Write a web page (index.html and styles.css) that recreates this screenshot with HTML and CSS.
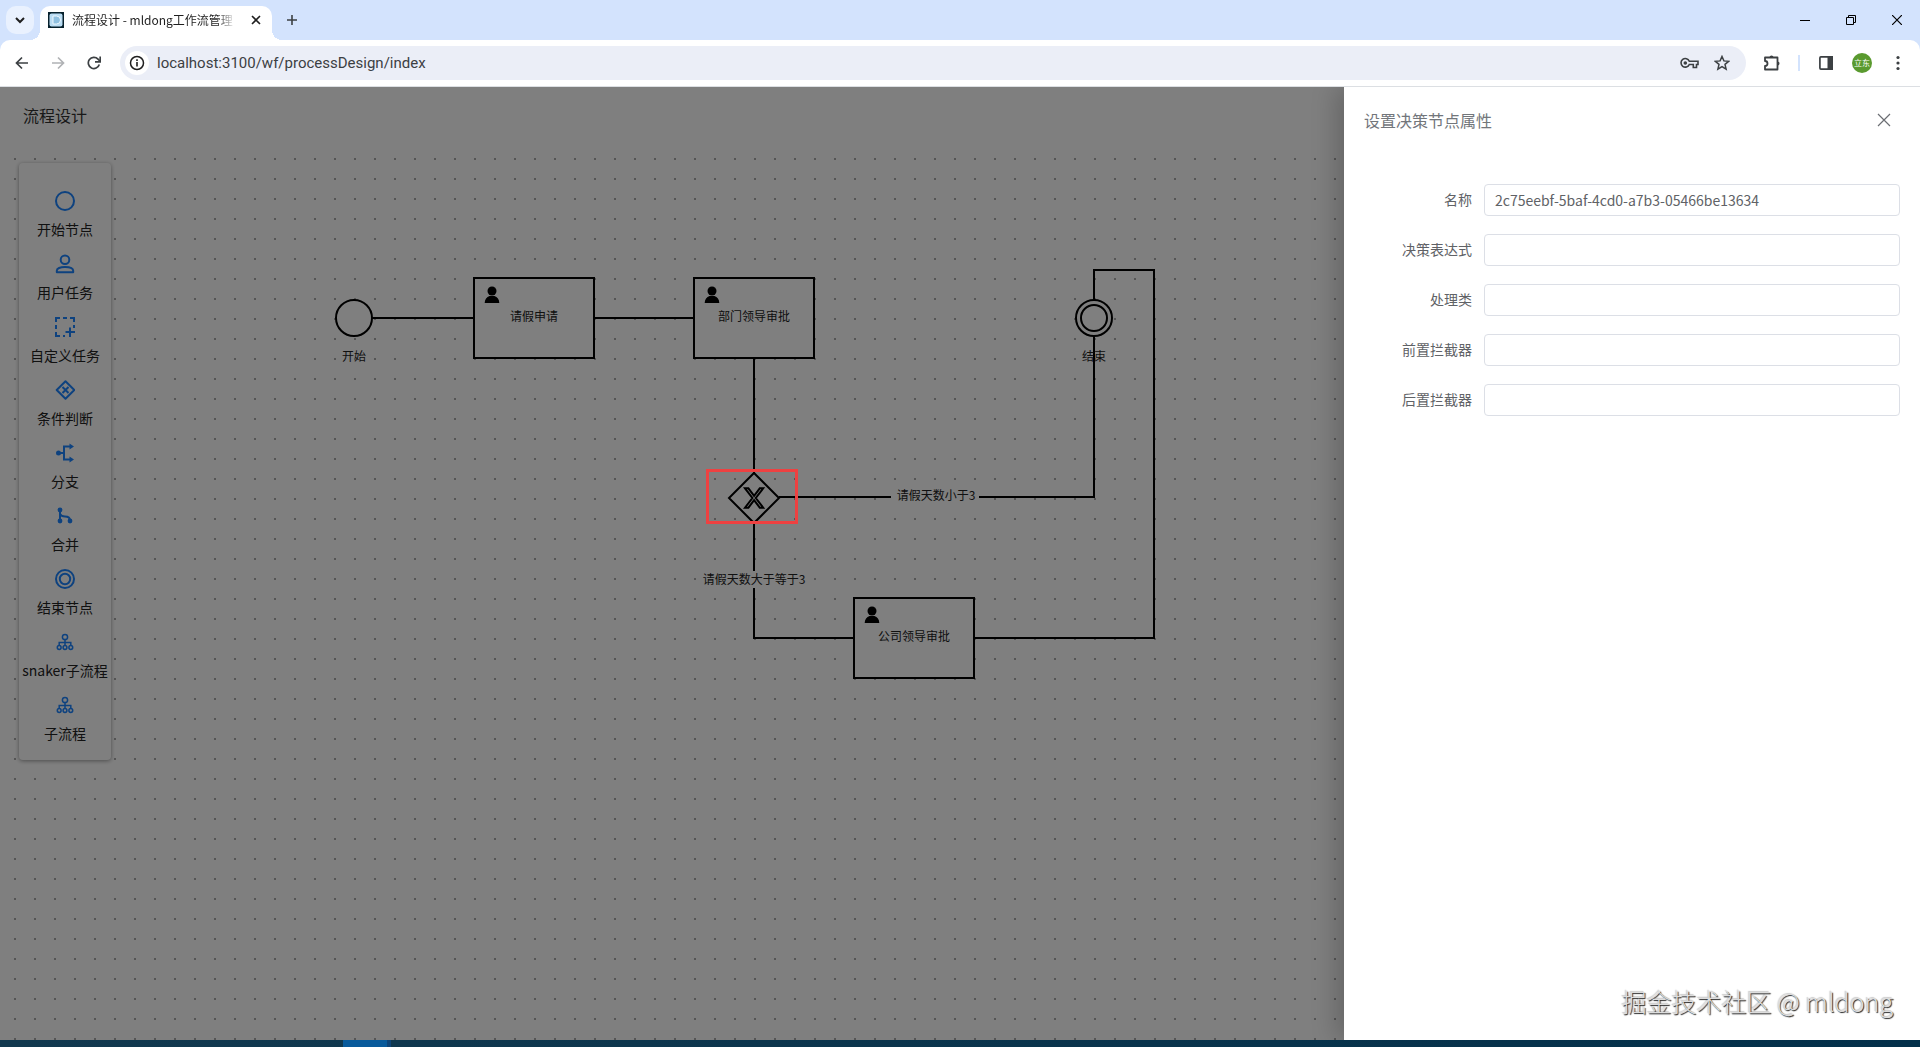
FILE: index.html
```html
<!DOCTYPE html>
<html lang="zh-CN">
<head>
<meta charset="utf-8">
<title>流程设计 - mldong工作流管理</title>
<link rel="stylesheet" href="styles.css">
</head>
<body>
<div class="desktop">
  <header class="browser">
    <div class="tab-strip">
      <button class="tab-search" aria-label="搜索标签页"><svg width="12" height="12" viewBox="0 0 12 12"><path d="M2 4l4 4 4-4" fill="none" stroke="#1f1f1f" stroke-width="2"/></svg></button>
      <div class="tab">
        <svg width="16" height="16" viewBox="0 0 16 16"><rect width="16" height="16" fill="#06202c"/><rect x="1.500" y="1.500" width="13" height="13" rx="2" fill="#b9dcf3"/><path d="M5 4h3.500a4 4 0 0 1 0 8H5z" fill="#8fc0e0" stroke="#eef8ff"/></svg>
        <span class="tab-title">流程设计 - mldong工作流管理</span>
        <button class="plain tab-close" aria-label="关闭标签页"><svg width="10" height="10" viewBox="0 0 10 10"><path d="M1 1l8 8M9 1l-8 8" stroke="#1f1f1f" stroke-width="1.600"/></svg></button>
      </div>
      <button class="plain new-tab" aria-label="新标签页"><svg width="12" height="12" viewBox="0 0 12 12"><path d="M6 1v10M1 6h10" stroke="#3c4043" stroke-width="1.600"/></svg></button>
      <div class="window-controls">
        <button class="plain" aria-label="最小化"><svg width="10" height="10"><path d="M0 5.500h10" stroke="#000"/></svg></button>
        <button class="plain" aria-label="还原"><svg width="10" height="10"><path d="M.5 2.500h7v7h-7zM2.500 2.500v-2h7v7h-2" fill="none" stroke="#000"/></svg></button>
        <button class="plain" aria-label="关闭"><svg width="10" height="10"><path d="M0 0l10 10M10 0L0 10" stroke="#000" stroke-width="1.200"/></svg></button>
      </div>
    </div>
    <div class="toolbar">
      <button class="plain nav" aria-label="后退"><svg width="14" height="14" viewBox="0 0 14 14"><path d="M13 7H2M7 1.500L1.500 7 7 12.500" fill="none" stroke="#3c4043" stroke-width="1.700"/></svg></button>
      <button class="plain nav" aria-label="前进"><svg width="14" height="14" viewBox="0 0 14 14"><path d="M1 7h11M7 1.500L12.500 7 7 12.500" fill="none" stroke="#b0b2b5" stroke-width="1.700"/></svg></button>
      <button class="plain nav" aria-label="重新加载"><svg width="14" height="14" viewBox="0 0 14 14"><path d="M12.300 8.500A5.600 5.600 0 1 1 11 3.100L12.800 5" fill="none" stroke="#3c4043" stroke-width="1.700"/><path d="M13.200.5v5.300H8" fill="none" stroke="#3c4043" stroke-width="1.700"/></svg></button>
      <div class="omnibox">
        <button class="site-info" aria-label="网站信息"><svg width="16" height="16" viewBox="0 0 16 16"><circle cx="8" cy="8" r="6.500" fill="none" stroke="#1f1f1f" stroke-width="1.500"/><path d="M8 7v4.500M8 4.300v1.700" stroke="#1f1f1f" stroke-width="1.600"/></svg></button>
        <input class="url" aria-label="地址" value="localhost:3100/wf/processDesign/index">
        <button class="plain box-icon" aria-label="密码"><svg width="20" height="12" viewBox="0 0 20 12"><path d="M9.300 4.200H18v3.300h-1.500v3h-3.200v-3H9.300A4.300 4.300 0 1 1 9.300 4.200z" fill="none" stroke="#3c4043" stroke-width="1.600"/><circle cx="5.300" cy="6" r="1.800" fill="#3c4043"/></svg></button>
        <button class="plain box-icon" aria-label="收藏"><svg width="16" height="16" viewBox="0 0 16 16"><path d="M8 1.500l1.900 4.400 4.800.4-3.700 3.100 1.100 4.700L8 11.600l-4.100 2.500L5 9.400 1.300 6.300l4.800-.4z" fill="none" stroke="#3c4043" stroke-width="1.500"/></svg></button>
      </div>
      <div class="extensions">
        <button class="plain" aria-label="扩展程序"><svg width="18" height="18" viewBox="0 0 18 18"><path d="M2 3.500h12.500v12H2v-3.500a2.400 2.400 0 0 0 0-5z" fill="none" stroke="#3c4043" stroke-width="1.800" stroke-linejoin="round"/><path d="M6.500 3.500a2 2 0 0 1 4 0zM14.500 7.500a2 2 0 0 1 0 4z" fill="#3c4043"/></svg></button>
        <span class="divider"></span>
        <button class="plain" aria-label="侧边栏"><svg width="16" height="16" viewBox="0 0 16 16"><rect x="1.900" y="1.900" width="12.200" height="12.200" rx="1" fill="none" stroke="#3c4043" stroke-width="1.700"/><path d="M9.500 1h5.500v14H9.500z" fill="#3c4043"/></svg></button>
        <button class="avatar" aria-label="个人资料">立东</button>
        <button class="plain" aria-label="菜单"><svg width="16" height="16" viewBox="0 0 16 16" fill="#3c4043"><circle cx="8" cy="2.500" r="1.600"/><circle cx="8" cy="8" r="1.600"/><circle cx="8" cy="13.500" r="1.600"/></svg></button>
      </div>
    </div>
  </header>

  <main class="page">
    <h1 class="page-title">流程设计</h1>
    <section class="canvas">
      <svg class="flow" role="img" aria-label="请假流程图">
        <defs>
          <g id="person"><circle cx="8" cy="5" r="4.500"/><path d="M.7 17c0-3.500 2-6 4.800-7h5c2.800 1 4.800 3.500 4.800 7z"/></g>
        </defs>
        <g class="edges">
          <path d="M372 173H474M594 173H694M754 213V328M779 352H1094V191M754 378V493H854M974 493H1154V125H1094V155"/>
        </g>
        <rect class="label-bg" x="891" y="344" width="88" height="17"/>
        <rect class="label-bg" x="699" y="426" width="110" height="17"/>
        <g class="shapes">
          <circle cx="354" cy="173" r="18"/>
          <rect x="474" y="133" width="120" height="80"/>
          <rect x="694" y="133" width="120" height="80"/>
          <rect x="854" y="453" width="120" height="80"/>
          <circle cx="1094" cy="173" r="18"/><circle cx="1094" cy="173" r="13"/>
          <path d="M754 328l25 25-25 25-25-25z"/>
          <path d="M745 343.300l7.400 9.700-7.400 9.700h3.400l5.700-7.500 5.700 7.500h3.400l-7.400-9.700 7.400-9.700h-3.400l-5.700 7.500-5.700-7.500z"/>
        </g>
        <use href="#person" x="484" y="141"/>
        <use href="#person" x="704" y="141"/>
        <use href="#person" x="864" y="461"/>
        <g class="flow-text">
          <text x="354" y="216">开始</text>
          <text x="534" y="176">请假申请</text>
          <text x="754" y="176">部门领导审批</text>
          <text x="914" y="496">公司领导审批</text>
          <text x="1094" y="216">结束</text>
          <text x="936" y="355">请假天数小于3</text>
          <text x="754" y="439">请假天数大于等于3</text>
        </g>
      </svg>
      <ul class="palette">
        <li><svg width="20" height="20" viewBox="0 0 20 20"><circle cx="10" cy="10" r="9"/></svg>开始节点</li>
        <li><svg width="20" height="20" viewBox="0 0 20 20"><circle cx="10" cy="5.700" r="4.300"/><path d="M1.800 18.200v-1.500c0-2.300 3.200-3.700 8.200-3.700s8.200 1.400 8.200 3.700v1.500z" stroke-linejoin="round"/></svg>用户任务</li>
        <li><svg width="20" height="20" viewBox="0 0 20 20"><path d="M1 5V1h4M8 1h4M15 1h4v4M1 8v4M1 15v4h4M8 19h2M19 8v3" /><path d="M10.500 15H20M15 10.500V20"/></svg>自定义任务</li>
        <li><svg width="20" height="20" viewBox="0 0 20 20"><path d="M10.500 1.200l8.800 8.800-8.800 8.800L1.700 10z" stroke-linejoin="round"/><path d="M7.500 7l6 6M13.500 7l-6 6"/></svg>条件判断</li>
        <li><svg width="20" height="20" viewBox="0 0 20 20"><circle cx="3.500" cy="10" r="2.500" class="solid"/><path d="M3.500 10H9M16 3.500H9v13h7"/><path class="solid" d="M14.500.5l4.500 3-4.500 3zM14.500 13.500l4.500 3-4.500 3z"/></svg>分支</li>
        <li><svg width="20" height="20" viewBox="0 0 20 20"><g class="solid"><circle cx="5" cy="4" r="2.400"/><circle cx="5" cy="15" r="2.400"/><circle cx="15" cy="15" r="2.400"/></g><path d="M5 4v11M5 8c1 2 3 2.500 5 2.500 3 0 5 1 5 4"/></svg>合并</li>
        <li><svg width="20" height="20" viewBox="0 0 20 20"><circle cx="10" cy="10" r="9"/><circle cx="10" cy="10" r="5.200"/></svg>结束节点</li>
        <li><svg class="thin" width="20" height="20" viewBox="0 0 20 20"><circle cx="10" cy="5" r="2.600"/><circle cx="4.200" cy="15.500" r="1.900"/><circle cx="10" cy="15.500" r="1.900"/><circle cx="15.800" cy="15.500" r="1.900"/><path d="M10 7.600v6M4.200 13.600v-3h11.600v3"/></svg>snaker子流程</li>
        <li><svg class="thin" width="20" height="20" viewBox="0 0 20 20"><circle cx="10" cy="5" r="2.600"/><circle cx="4.200" cy="15.500" r="1.900"/><circle cx="10" cy="15.500" r="1.900"/><circle cx="15.800" cy="15.500" r="1.900"/><path d="M10 7.600v6M4.200 13.600v-3h11.600v3"/></svg>子流程</li>
      </ul>
    </section>
    <div class="mask"></div>
    <div class="highlight"></div>
    <aside class="drawer">
      <div class="drawer-head">
        <h2>设置决策节点属性</h2>
        <button class="plain" aria-label="关闭"><svg width="14" height="14" viewBox="0 0 14 14"><path d="M1 1l12 12M13 1L1 13" stroke="#6b6e73" stroke-width="1.200"/></svg></button>
      </div>
      <form class="form">
        <div class="row"><label for="f1">名称</label><input id="f1" value="2c75eebf-5baf-4cd0-a7b3-05466be13634"></div>
        <div class="row"><label for="f2">决策表达式</label><input id="f2"></div>
        <div class="row"><label for="f3">处理类</label><input id="f3"></div>
        <div class="row"><label for="f4">前置拦截器</label><input id="f4"></div>
        <div class="row"><label for="f5">后置拦截器</label><input id="f5"></div>
      </form>
      <p class="watermark">掘金技术社区 @ mldong</p>
    </aside>
  </main>
  <footer class="taskbar"><span class="task-active"></span></footer>
</div>
</body>
</html>
```
FILE: styles.css
```css
* { box-sizing: border-box; }
body {
  margin: 0;
  font: 14px/22px "Noto Sans CJK SC", sans-serif;
  color: #000;
}
button, input { font: inherit; color: inherit; }
h1, h2, p, ul { margin: 0; padding: 0; font-weight: 400; }
svg { display: block; flex: none; }
.plain {
  display: flex;
  align-items: center;
  justify-content: center;
  border: 0;
  padding: 0;
  background: none;
}
.desktop { display: flex; flex-direction: column; min-height: 100vh; }

/* browser frame */
.browser { background: #d3e3fd; }
.tab-strip { display: flex; align-items: center; height: 40px; padding-left: 6px; }
.tab-search {
  display: flex;
  align-items: center;
  justify-content: center;
  width: 28px;
  height: 28px;
  border: 0;
  border-radius: 10px;
  background: #e9f1fe;
}
.tab {
  position: relative;
  display: flex;
  align-items: center;
  align-self: flex-end;
  width: 232px;
  height: 34px;
  margin-left: 6px;
  padding: 0 8px 6px;
  border-radius: 10px 10px 0 0;
  background: #fff;
}
.tab::before, .tab::after {
  content: "";
  position: absolute;
  bottom: 0;
  width: 10px;
  height: 10px;
}
.tab::before { left: -10px; background: radial-gradient(circle at 0 0, transparent 10px, #fff 10px); }
.tab::after { right: -10px; background: radial-gradient(circle at 100% 0, transparent 10px, #fff 10px); }
.tab-title {
  flex: 1;
  margin-left: 8px;
  overflow: hidden;
  white-space: nowrap;
  font-size: 12px;
  line-height: 18px;
  color: #1f1f1f;
  -webkit-mask-image: linear-gradient(90deg, #000 88%, transparent);
  mask-image: linear-gradient(90deg, #000 88%, transparent);
}
.tab-close { width: 16px; height: 16px; margin-left: 12px; }
.new-tab { width: 28px; height: 28px; margin-left: 6px; }
.window-controls { display: flex; margin-left: auto; }
.window-controls button { width: 46px; height: 40px; }
.toolbar {
  display: flex;
  align-items: center;
  height: 47px;
  padding: 0 13px 0 4px;
  border-bottom: 1px solid #dcdfe3;
  border-radius: 10px 10px 0 0;
  background: #fff;
}
.nav { width: 36px; height: 34px; }
.omnibox {
  flex: 1;
  display: flex;
  align-items: center;
  height: 34px;
  margin-left: 8px;
  padding: 0 8px 0 5px;
  border-radius: 17px;
  background: #ebeef7;
}
.site-info {
  display: flex;
  align-items: center;
  justify-content: center;
  width: 24px;
  height: 24px;
  padding: 0;
  border: 0;
  border-radius: 50%;
  background: #fff;
}
.url {
  flex: 1;
  min-width: 0;
  margin-left: 8px;
  padding: 0;
  border: 0;
  outline: 0;
  background: none;
  font-family: Roboto, sans-serif;
  font-size: 15px;
  color: #3c4043;
}
.box-icon { width: 32px; height: 32px; }
.extensions { display: flex; align-items: center; gap: 17px; margin-left: 17px; }
.extensions button { width: 18px; height: 30px; }
.divider { width: 2px; height: 16px; background: #d3e3fd; }
.extensions .avatar {
  width: 20px;
  height: 20px;
  padding: 0;
  border: 0;
  border-radius: 50%;
  background: #5a9a2f;
  color: #fff;
  font-size: 8px;
  line-height: 20px;
}

/* designer */
.page {
  position: relative;
  flex: 1;
  display: flex;
  flex-direction: column;
  overflow: hidden;
  background: #fff;
}
.page-title { padding: 17px 23px 19px; font-size: 16px; line-height: 22px; color: #333; }
.canvas {
  position: relative;
  flex: 1;
  background: conic-gradient(from 270deg at 2px 2px, #aaa 90deg, transparent 0) 14px 13px / 20px 20px;
}
.flow { position: absolute; inset: 0; width: 100%; height: 100%; }
.edges path { fill: none; stroke: #000; stroke-width: 2; }
.shapes > * { fill: #fff; stroke: #000; stroke-width: 2; }
.label-bg { fill: #fff; }
.flow-text { font-size: 12px; text-anchor: middle; fill: #222; }
.palette {
  position: absolute;
  top: 18px;
  left: 19px;
  width: 92px;
  display: flex;
  flex-direction: column;
  gap: 14px;
  padding: 28px 0 16px;
  border-radius: 4px;
  background: #fff;
  box-shadow: 0 1px 4px rgba(0, 0, 0, .4);
  color: #222;
  list-style: none;
}
.palette li {
  display: flex;
  flex-direction: column;
  align-items: center;
  gap: 7px;
  white-space: nowrap;
}
.palette svg { fill: none; stroke: #1d84ff; stroke-width: 2; }
.palette .thin { stroke-width: 1.5; }
.palette .solid { fill: #1d84ff; stroke: none; }
.mask { position: absolute; inset: 0; background: rgba(0, 0, 0, .5); }
.highlight {
  position: absolute;
  top: 382px;
  left: 706px;
  width: 92px;
  height: 55px;
  border: 3px solid #ee4141;
}

/* property drawer */
.drawer {
  position: absolute;
  top: 0;
  right: 0;
  bottom: 0;
  width: 30%;
  display: flex;
  flex-direction: column;
  padding: 20px;
  background: #fff;
  box-shadow: -8px 0 24px rgba(0, 0, 0, .2);
}
.drawer-head { display: flex; align-items: center; justify-content: space-between; height: 26px; color: #72767b; }
.drawer-head h2 { font-size: 16px; }
.drawer-head button { width: 32px; height: 26px; }
.form { display: flex; flex-direction: column; gap: 18px; margin-top: 51px; color: #606266; }
.row { display: flex; align-items: center; }
.row label { width: 120px; padding: 0 12px 2px 0; text-align: right; }
.row input {
  flex: 1;
  min-width: 0;
  height: 32px;
  padding: 0 10px;
  border: 1px solid #dcdfe6;
  border-radius: 4px;
  background: #fff;
}
.watermark {
  margin-top: auto;
  padding-right: 7px;
  text-align: right;
  font-size: 25px;
  font-weight: 300;
  line-height: 38px;
  color: #ddd;
  text-shadow: 1px 1px 1px #222, -1px -1px 1px #ccc;
}
.taskbar { height: 7px; padding-left: 343px; background: linear-gradient(90deg, #12394f, #03304a); }
.task-active { display: block; width: 48px; height: 7px; border-right: 4px solid #0d4478; background: #085a9b; }
```
